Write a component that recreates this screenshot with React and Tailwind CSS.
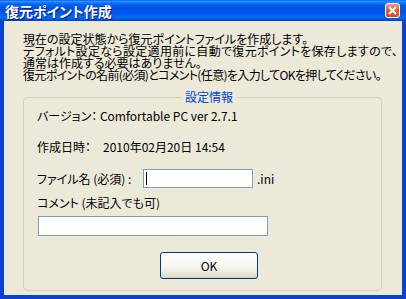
export default function App() {
  return (
    <div className="flex h-[299px] w-[406px] flex-col bg-[#0842d4] font-['Noto_Sans_CJK_JP','Noto_Sans',sans-serif] text-[12px] leading-[12px] text-black [font-feature-settings:'palt']">
      {/* Title bar */}
      <div className="flex h-[21px] shrink-0 items-center justify-between bg-[linear-gradient(180deg,#0058ee_0%,#3593ff_6%,#127dff_12%,#0262ee_22%,#0054e3_35%,#0055eb_60%,#005bf5_70%,#026afe_80%,#0062ef_88%,#0052d6_94%,#0040ab_100%)] pl-[5px] pr-[6px]">
        <span className="text-[14px] font-bold leading-[14px] text-white [text-shadow:1px_1px_#0f1089]">
          復元ポイント作成
        </span>
        <button
          className="flex h-[15px] w-[15px] items-center justify-center rounded-[3px] border border-white bg-[linear-gradient(180deg,#f0987a_0%,#e5603a_40%,#d8471f_100%)]"
          aria-label="Close"
        >
          <svg className="h-[9px] w-[9px]" viewBox="0 0 9 9">
            <path d="M1 1L8 8M8 1L1 8" stroke="white" strokeWidth="2" />
          </svg>
        </button>
      </div>

      {/* Body */}
      <div className="mx-[4px] mb-[4px] flex flex-1 flex-col bg-[#ece9d8] pl-[19px] pt-[12px]">
        <p className="whitespace-nowrap">
          現在の設定状態から復元ポイントファイルを作成します。
          <br />
          <span className="tracking-[0.3px]">デフォルト設定なら設定適用前に自動で復元ポイントを保存しますので、</span>
          <br />
          通常は作成する必要はありません。
          <br />
          <span className="tracking-[-0.65px]">
            復元ポイントの名前(必須)とコメント(任意)を入力してOKを押してください。
          </span>
        </p>

        <fieldset className="mt-[10px] h-[200px] w-[359px] rounded-[4px] border border-[#d0d0bf] pl-[13px]">
          <legend className="mx-auto px-[3px] text-[#0046d5]">設定情報</legend>

          <div className="mt-[7px]">バージョン： Comfortable PC ver 2.7.1</div>
          <div className="mt-[19px] flex">
            <span className="w-[66px] shrink-0">作成日時：</span>
            <span>2010年02月20日 14:54</span>
          </div>

          <div className="mt-[16px] flex items-center">
            <span className="w-[106px] shrink-0">ファイル名 (必須) :</span>
            <div className="flex h-[19px] w-[110px] items-center border border-[#7f9db9] bg-white pl-[2px]">
              <div className="h-[13px] w-px bg-black" />
            </div>
            <span className="ml-[4px]">.ini</span>
          </div>

          <div className="mt-[9px]">コメント (未記入でも可)</div>
          <div className="ml-px mt-[7px] h-[20px] w-[230px] border border-[#7f9db9] bg-white" />

          <button className="mx-auto mt-[16px] flex h-[27px] w-[98px] items-center justify-center rounded-[3px] border border-[#003c74] bg-[linear-gradient(180deg,#ffffff_0%,#f4f3ee_60%,#e3e0d3_90%,#d6d0c5_100%)]">
            OK
          </button>
        </fieldset>
      </div>
    </div>
  );
}
